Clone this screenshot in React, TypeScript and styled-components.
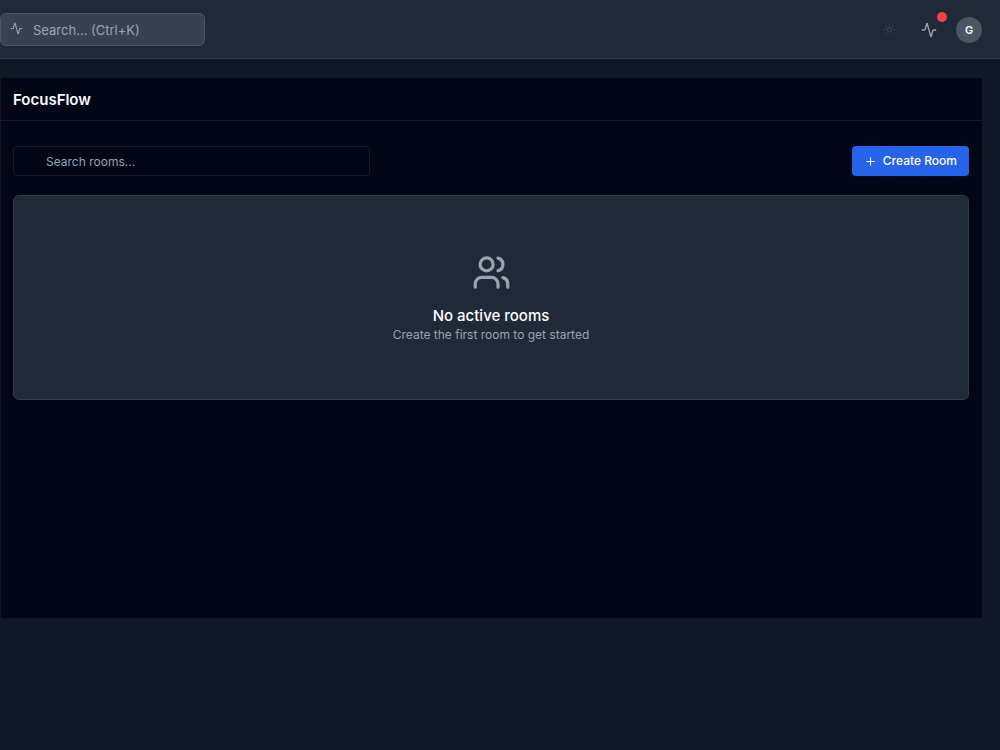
import React from "react";
import styled, { createGlobalStyle } from "styled-components";
import { Activity, Plus, Sun, Users } from "lucide-react";

const GlobalStyle = createGlobalStyle`
  *, *::before, *::after { box-sizing: border-box; }
  body {
    margin: 0;
    background: #111827;
    color: #f8fafc;
    font-family: Inter, "Liberation Sans", sans-serif;
    font-size: 13px;
    line-height: 16px;
  }
  button, input { font: inherit; }
`;

const Header = styled.header`
  display: flex;
  align-items: center;
  justify-content: space-between;
  padding: 13px 18px 12px 0;
  background: #1f2937;
  border-bottom: 1px solid #303a49;
`;

const GlobalSearch = styled.label`
  display: flex;
  align-items: center;
  gap: 10px;
  width: 205px;
  height: 33px;
  padding: 0 9px;
  background: #374151;
  border: 1px solid #4b5563;
  border-radius: 6px;
  color: #9ca3af;

  svg { flex: none; margin-bottom: 3px; }
`;

const GlobalSearchInput = styled.input`
  flex: 1;
  min-width: 0;
  padding: 0;
  border: 0;
  outline: 0;
  background: transparent;
  color: #f8fafc;

  &::placeholder { color: #9ca3af; opacity: 1; }
`;

const Actions = styled.div`
  display: flex;
  align-items: center;
  gap: 14px;
`;

const IconButton = styled.button<{ $dim?: boolean }>`
  position: relative;
  display: grid;
  place-items: center;
  width: 26px;
  height: 26px;
  padding: 0;
  border: 0;
  background: transparent;
  color: ${(p) => (p.$dim ? "#374151" : "#9ca3af")};
`;

const Dot = styled.span`
  position: absolute;
  top: -5px;
  right: -5px;
  width: 10px;
  height: 10px;
  border-radius: 50%;
  background: #ef4444;
`;

const Avatar = styled.button`
  width: 26px;
  height: 26px;
  padding: 0;
  border: 0;
  border-radius: 50%;
  background: #4b5563;
  color: #ffffff;
  font-size: 11px;
  font-weight: 600;
`;

const Panel = styled.main`
  min-height: 72vh;
  margin: 19px 18px 0 0;
  background: #020617;
  border-left: 1px solid #0f172a;
`;

const PanelHeader = styled.div`
  padding: 12px 12px 10px;
  border-bottom: 1px solid #141c2c;
`;

const Title = styled.h1`
  margin: 0;
  font-size: 15px;
  line-height: 20px;
  font-weight: 600;
`;

const PanelBody = styled.div`
  display: flex;
  flex-direction: column;
  gap: 19px;
  padding: 25px 13px 25px 12px;
`;

const Toolbar = styled.div`
  display: flex;
  align-items: center;
  justify-content: space-between;
  gap: 16px;
`;

const RoomSearch = styled.input`
  width: 357px;
  height: 30px;
  padding: 0 12px 0 32px;
  border: 1px solid #151d2e;
  border-radius: 4px;
  outline: 0;
  background: #020617;
  color: #f8fafc;
  font-size: 12px;

  &::placeholder { color: #94a3b8; opacity: 1; }
`;

const CreateButton = styled.button`
  display: flex;
  align-items: center;
  gap: 6px;
  height: 30px;
  padding: 0 12px;
  border: 0;
  border-radius: 4px;
  background: #2563eb;
  color: #ffffff;
  font-size: 12px;
  font-weight: 500;
`;

const EmptyState = styled.section`
  display: flex;
  flex-direction: column;
  align-items: center;
  padding: 57px 16px 55px;
  background: #1f2937;
  border: 1px solid #303b4b;
  border-radius: 6px;
  color: #9ca3af;
`;

const EmptyTitle = styled.h2`
  margin: 14px 0 0;
  color: #ffffff;
  font-size: 15px;
  line-height: 20px;
  font-weight: 500;
`;

const EmptyText = styled.p`
  margin: 0;
  font-size: 12px;
  line-height: 18px;
`;

export default function App() {
  return (
    <>
      <GlobalStyle />
      <Header>
        <GlobalSearch>
          <Activity size={13} aria-hidden />
          <GlobalSearchInput type="text" aria-label="Search" placeholder="Search... (Ctrl+K)" />
        </GlobalSearch>
        <Actions>
          <IconButton type="button" $dim aria-label="Toggle theme">
            <Sun size={13} />
          </IconButton>
          <IconButton type="button" aria-label="Activity">
            <Activity size={16} />
            <Dot />
          </IconButton>
          <Avatar type="button" aria-label="Account">G</Avatar>
        </Actions>
      </Header>
      <Panel>
        <PanelHeader>
          <Title>FocusFlow</Title>
        </PanelHeader>
        <PanelBody>
          <Toolbar>
            <RoomSearch type="text" aria-label="Search rooms" placeholder="Search rooms..." />
            <CreateButton type="button">
              <Plus size={13} aria-hidden />
              Create Room
            </CreateButton>
          </Toolbar>
          <EmptyState>
            <Users size={39} aria-hidden />
            <EmptyTitle>No active rooms</EmptyTitle>
            <EmptyText>Create the first room to get started</EmptyText>
          </EmptyState>
        </PanelBody>
      </Panel>
    </>
  );
}
